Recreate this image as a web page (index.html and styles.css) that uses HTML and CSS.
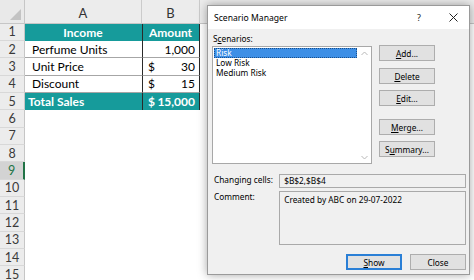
FILE: index.html
```html
<!DOCTYPE html>
<html lang="en">
<head>
    <meta charset="UTF-8">
    <title>Scenario Manager</title>
    <link rel="stylesheet" href="styles.css">
</head>
<body>
    <div class="sheet">
        <div class="corner"><span class="tri"></span></div>
        <div class="colhead">A</div>
        <div class="colhead">B</div>
        <div class="colhead last"></div>

        <div class="rowhead">1</div>
        <div class="cell teal center bold">Income</div>
        <div class="cell teal center bold sep">Amount</div>
        <div class="cell blank"></div>

        <div class="rowhead">2</div>
        <div class="cell indent line">Perfume Units</div>
        <div class="cell sep line right">1,000</div>
        <div class="cell blank"></div>

        <div class="rowhead">3</div>
        <div class="cell indent line">Unit Price</div>
        <div class="cell sep line money"><span>$</span><span>30</span></div>
        <div class="cell blank"></div>

        <div class="rowhead">4</div>
        <div class="cell indent line">Discount</div>
        <div class="cell sep line money"><span>$</span><span>15</span></div>
        <div class="cell blank"></div>

        <div class="rowhead">5</div>
        <div class="cell teal bold">Total Sales</div>
        <div class="cell teal bold sep money"><span>$</span><span>15,000</span></div>
        <div class="cell blank"></div>

        <div class="rowhead">6</div><div class="cell"></div><div class="cell"></div><div class="cell blank"></div>
        <div class="rowhead">7</div><div class="cell"></div><div class="cell"></div><div class="cell blank"></div>
        <div class="rowhead">8</div><div class="cell"></div><div class="cell"></div><div class="cell blank"></div>
        <div class="rowhead active">9</div><div class="cell"></div><div class="cell"></div><div class="cell blank"></div>
        <div class="rowhead">10</div><div class="cell"></div><div class="cell"></div><div class="cell blank"></div>
        <div class="rowhead">11</div><div class="cell"></div><div class="cell"></div><div class="cell blank"></div>
        <div class="rowhead">12</div><div class="cell"></div><div class="cell"></div><div class="cell blank"></div>
        <div class="rowhead">13</div><div class="cell"></div><div class="cell"></div><div class="cell blank"></div>
        <div class="rowhead">14</div><div class="cell"></div><div class="cell"></div><div class="cell blank"></div>
        <div class="rowhead">15</div><div class="cell"></div><div class="cell"></div><div class="cell blank"></div>
    </div>

    <div class="dialog">
        <div class="titlebar">
            <span class="title">Scenario Manager</span>
            <span class="help">?</span>
            <span class="close-x">
                <svg width="9" height="9" viewBox="0 0 9 9"><path d="M0.5 0.5 L8.5 8.5 M8.5 0.5 L0.5 8.5" stroke="#222" stroke-width="1" fill="none"/></svg>
            </span>
        </div>
        <div class="dlg-body">
            <div class="label">S<u>c</u>enarios:</div>
            <div class="main">
                <div class="listbox">
                    <div class="items">
                        <div class="item selected">Risk</div>
                        <div class="item">Low Risk</div>
                        <div class="item">Medium Risk</div>
                    </div>
                    <div class="scroll">
                        <svg width="7" height="5" viewBox="0 0 7 5"><path d="M0.5 4 L3.5 1 L6.5 4" stroke="#b8b8b8" fill="none"/></svg>
                        <svg width="7" height="5" viewBox="0 0 7 5"><path d="M0.5 1 L3.5 4 L6.5 1" stroke="#b8b8b8" fill="none"/></svg>
                    </div>
                </div>
                <div class="side">
                    <button class="btn"><u>A</u>dd...</button>
                    <button class="btn b2"><u>D</u>elete</button>
                    <button class="btn b3"><u>E</u>dit...</button>
                    <button class="btn b4"><u>M</u>erge...</button>
                    <button class="btn b5">S<u>u</u>mmary...</button>
                </div>
            </div>
            <div class="field">
                <span class="flabel">Changing cells:</span>
                <div class="fbox">$B$2,$B$4</div>
            </div>
            <div class="field comment">
                <span class="flabel">Comment:</span>
                <div class="fbox tall">Created by ABC on 29-07-2022</div>
            </div>
            <div class="footer">
                <button class="btn default"><u>S</u>how</button>
                <button class="btn">Close</button>
            </div>
        </div>
    </div>
</body>
</html>
```

FILE: styles.css
```css
html, body {
    margin: 0;
    height: 100%;
    overflow: hidden;
    background: #fff;
}
body {
    position: relative;
    font-family: Lato, "Noto Sans", sans-serif;
}
.sheet {
    display: grid;
    grid-template-columns: 25px 117px 58px 1fr;
    grid-template-rows: 23.6px;
    grid-auto-rows: 17.35px;
    font-size: 12px;
    color: #000;
}
.corner {
    background: #e9e9e9;
    border-right: 1px solid #c6c6c6;
    border-bottom: 1px solid #c6c6c6;
    position: relative;
    box-sizing: border-box;
}
.tri {
    position: absolute;
    right: 3px;
    bottom: 3px;
    width: 0;
    height: 0;
    border-left: 11px solid transparent;
    border-bottom: 11px solid #c3c3c3;
}
.colhead {
    background: #ececec;
    border-right: 1px solid #cbcbcb;
    border-bottom: 1px solid #c6c6c6;
    box-sizing: border-box;
    display: flex;
    align-items: center;
    justify-content: center;
    color: #333;
    font-size: 13px;
    padding-top: 3px;
}
.colhead.last {
    border-right: none;
}
.rowhead {
    background: #ececec;
    border-right: 1px solid #c6c6c6;
    border-bottom: 1px solid #d8d8d8;
    box-sizing: border-box;
    display: flex;
    align-items: center;
    justify-content: center;
    color: #3a3a3a;
    font-size: 12.5px;
}
.rowhead.active {
    background: #d3d3d3;
    color: #217346;
    border-right: 2px solid #217346;
}
.cell {
    box-sizing: border-box;
    display: flex;
    align-items: center;
    padding: 0 4px 0 3px;
    white-space: nowrap;
}
.cell.teal {
    background: #169b9b;
    color: #fff;
}
.bold {
    font-weight: bold;
}
.center {
    justify-content: center;
}
.right {
    justify-content: flex-end;
}
.money {
    justify-content: space-between;
    padding-left: 5px;
}
.indent {
    padding-left: 7px;
}
.line {
    border-bottom: 1px solid #a6a6a6;
}
.sep {
    border-left: 1px solid #2a2a2a;
    border-right: 1px solid #2a2a2a;
}
.dialog {
    position: absolute;
    left: 207px;
    top: 5px;
    width: 263px;
    height: 270px;
    box-sizing: border-box;
    background: #f0f0f0;
    border: 1px solid #9a9a9a;
    box-shadow: 0 0 9px rgba(0, 0, 0, 0.35);
    font-family: "Noto Sans", sans-serif;
    font-size: 8.3px;
    color: #000;
}
.titlebar {
    height: 23px;
    background: #fff;
    display: flex;
    align-items: center;
    padding-left: 6px;
}
.title {
    flex: 1;
    font-size: 8.6px;
}
.help {
    width: 12px;
    font-size: 9px;
    color: #222;
    margin-right: 20px;
}
.close-x {
    display: flex;
    margin-right: 11px;
}
.dlg-body {
    padding: 4px 3px 0 4px;
}
.label {
    height: 12px;
    line-height: 12px;
    margin: 0 0 1px 1px;
}
.main {
    display: flex;
    gap: 7px;
}
.listbox {
    width: 160px;
    height: 118px;
    box-sizing: border-box;
    background: #fff;
    border: 1px solid #a8a8a8;
    display: flex;
}
.items {
    flex: 1;
    padding: 1px 0 0 1px;
}
.item {
    height: 10px;
    line-height: 10px;
    padding-left: 2px;
}
.item.selected {
    background: #3d8fe6;
    color: #fff;
    outline: 1px dotted #1a4f8a;
    outline-offset: -1px;
}
.scroll {
    width: 14px;
    display: flex;
    flex-direction: column;
    justify-content: space-between;
    align-items: center;
    padding: 4px 0 3px;
}
.side {
    display: flex;
    flex-direction: column;
    margin-top: -1px;
}
.btn {
    width: 56px;
    height: 16px;
    box-sizing: border-box;
    background: #e1e1e1;
    border: 1px solid #adadad;
    font-family: "Noto Sans", sans-serif;
    font-size: 8.3px;
    color: #000;
    padding: 0;
    margin: 0;
}
.b2 { margin-top: 7px; }
.b3 { margin-top: 6px; }
.b4 { margin-top: 13px; }
.b5 { margin-top: 6px; }
.btn.default {
    border: 1px solid #2a7fd6;
    box-shadow: inset 0 0 0 1px #2a7fd6;
}
.field {
    display: flex;
    margin-top: 10px;
}
.field.comment {
    margin-top: 3px;
}
.flabel {
    width: 66px;
    padding-left: 2px;
    line-height: 12px;
}
.fbox {
    width: 189px;
    height: 14px;
    box-sizing: border-box;
    border: 1px solid #a9a9a9;
    background: #f0f0f0;
    padding: 0 4px;
    line-height: 12px;
}
.fbox.tall {
    height: 54px;
    padding-top: 2px;
}
.footer {
    display: flex;
    justify-content: flex-end;
    gap: 8px;
    margin-top: 9px;
    padding-right: 0;
}
```
